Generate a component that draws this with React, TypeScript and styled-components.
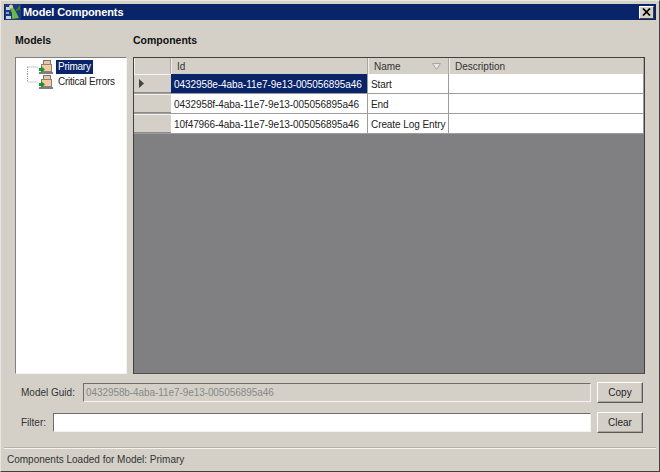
import React from "react";
import styled, { createGlobalStyle } from "styled-components";

const GlobalStyle = createGlobalStyle`
  html, body { margin: 0; padding: 0; background: #d4d0c8; }
  body { font-family: "Liberation Sans", Arial, sans-serif; font-size: 10px; color: #1a1a1a; }
`;

const Window = styled.div`
  width: 660px;
  height: 472px;
  box-sizing: border-box;
  display: flex;
  flex-direction: column;
  background: #d4d0c8;
  border-style: solid;
  border-width: 1px;
  border-color: #e8e6e0 #404040 #404040 #e8e6e0;
  padding: 3px 3px 2px 3px;
`;

const TitleBar = styled.div`
  height: 16px;
  flex: none;
  display: flex;
  align-items: center;
  background: #0a246a;
  padding: 0 2px 0 1px;
  gap: 2px;
`;

const TitleText = styled.span`
  flex: 1;
  color: #fff;
  font-weight: bold;
  font-size: 11px;
  letter-spacing: -0.1px;
`;

const CloseButton = styled.div`
  width: 15px;
  height: 13px;
  display: flex;
  align-items: center;
  justify-content: center;
  background: #d4d0c8;
  border-style: solid;
  border-width: 1px;
  border-color: #fff #404040 #404040 #fff;
  box-sizing: border-box;
`;

const Body = styled.div`
  flex: 1;
  display: flex;
  flex-direction: column;
  padding: 13px 11px 0 11px;
`;

const Panes = styled.div`
  display: flex;
  gap: 6px;
`;

const TreePane = styled.div`
  width: 112px;
  display: flex;
  flex-direction: column;
`;

const GridPane = styled.div`
  width: 512px;
  display: flex;
  flex-direction: column;
`;

const PaneLabel = styled.div`
  height: 24px;
  font-weight: bold;
  font-size: 10.5px;
  line-height: 14px;
  color: #111;
`;

const TreeBox = styled.div`
  height: 317px;
  box-sizing: border-box;
  background: #fff;
  border-style: solid;
  border-width: 1px;
  border-color: #808080 #f4f3ef #f4f3ef #808080;
  padding: 1px 0 0 11px;
`;

const TreeRow = styled.div`
  height: 15px;
  display: flex;
  align-items: center;
  position: relative;
  padding-left: 11px;
`;

const Connector = styled.svg`
  position: absolute;
  left: 0;
  top: 0;
`;

const NodeLabel = styled.span<{ $selected?: boolean }>`
  margin-left: 3px;
  padding: 0 2px;
  line-height: 14px;
  letter-spacing: -0.25px;
  color: ${(p) => (p.$selected ? "#fff" : "#222")};
  background: ${(p) => (p.$selected ? "#0a246a" : "transparent")};
`;

const GridBox = styled.div`
  height: 317px;
  box-sizing: border-box;
  background: #807f82;
  border-style: solid;
  border-width: 1px;
  border-color: #404040 #404040 #505050 #404040;
  display: flex;
  flex-direction: column;
`;

const Columns = "37px 197px 81px 1fr";

const HeaderRow = styled.div`
  height: 16px;
  flex: none;
  display: grid;
  grid-template-columns: ${Columns};
  background: #d4d0c8;
`;

const HeaderCell = styled.div`
  box-sizing: border-box;
  display: flex;
  align-items: center;
  justify-content: space-between;
  padding: 0 7px 0 5px;
  color: #333;
  border-right: 1px solid #a8a69f;
  border-left: 1px solid #f0efeb;
`;

const Row = styled.div`
  height: 19px;
  flex: none;
  display: grid;
  grid-template-columns: ${Columns};
  background: #fff;
  border-bottom: 1px solid #9c9c9c;
  box-sizing: content-box;
`;

const RowHeader = styled.div`
  display: flex;
  align-items: center;
  padding-left: 5px;
  background: #d4d0c8;
  border-top: 1px solid #f4f3ef;
  border-bottom: 1px solid #8e8c86;
  box-sizing: border-box;
`;

const Cell = styled.div<{ $selected?: boolean }>`
  display: flex;
  align-items: center;
  padding: 1px 0 0 3px;
  white-space: nowrap;
  overflow: hidden;
  letter-spacing: -0.08px;
  color: ${(p) => (p.$selected ? "#fff" : "#222")};
  background: ${(p) => (p.$selected ? "#0a246a" : "#fff")};
  border-right: 1px solid #9c9c9c;
  box-sizing: border-box;
`;

const FieldRow = styled.div<{ $top: number }>`
  display: flex;
  align-items: center;
  margin-top: ${(p) => p.$top}px;
  padding-left: 6px;
`;

const FieldLabel = styled.label<{ $width: number }>`
  width: ${(p) => p.$width}px;
  flex: none;
  color: #333;
`;

const TextField = styled.div<{ $disabled?: boolean }>`
  flex: 1;
  height: 19px;
  box-sizing: border-box;
  display: flex;
  align-items: center;
  padding-left: 2px;
  letter-spacing: -0.08px;
  color: #8a8985;
  background: ${(p) => (p.$disabled ? "#d4d0c8" : "#fff")};
  border-style: solid;
  border-width: 1px;
  border-color: #6e6d69 #f4f3ef #f4f3ef #6e6d69;
`;

const Button = styled.div`
  width: 46px;
  height: 21px;
  flex: none;
  margin: 0 2px 0 6px;
  box-sizing: border-box;
  display: flex;
  align-items: center;
  justify-content: center;
  color: #222;
  background: #d4d0c8;
  border-style: solid;
  border-width: 1px;
  border-color: #fff #5a5a5a #5a5a5a #fff;
  box-shadow: inset -1px -1px 0 #a8a69f;
`;

const StatusBar = styled.div`
  height: 21px;
  flex: none;
  box-sizing: border-box;
  display: flex;
  align-items: center;
  padding: 1px 0 0 3px;
  color: #333;
  border-top: 1px solid #f4f3ef;
  box-shadow: 0 -1px 0 #b5b3ac;
`;

function AppIcon() {
  return (
    <svg width="16" height="16" viewBox="0 0 16 16">
      <rect x="0" y="0" width="16" height="16" fill="#1c3a80" />
      <rect x="1" y="3" width="4" height="3" fill="#c8d0d8" />
      <rect x="1" y="8" width="3" height="2" fill="#8fa4c0" />
      <rect x="1" y="12" width="5" height="3" fill="#c8d0d8" />
      <path d="M4 3 L8 3 L11 8 L14 14 L7 15 L7 9 Z" fill="#6ab845" />
      <circle cx="6" cy="2.5" r="2" fill="#e0c8a0" />
      <path d="M10 7 L15 1 L15 6 Z" fill="#3f7a2c" />
    </svg>
  );
}

function CloseGlyph() {
  return (
    <svg width="9" height="8" viewBox="0 0 9 8">
      <path d="M1 0.5 L8 7.5 M8 0.5 L1 7.5" stroke="#000" strokeWidth="1.7" fill="none" />
    </svg>
  );
}

function ModelIcon() {
  return (
    <svg width="15" height="14" viewBox="0 0 15 14" style={{ flex: "none" }}>
      <rect x="5.5" y="0.5" width="7" height="5" fill="#eec4a2" stroke="#6f7a70" />
      <rect x="3.5" y="4.5" width="10" height="7" fill="#f6c9a4" stroke="#8c8078" />
      <rect x="1" y="12" width="14" height="2" fill="#7e7e7e" />
      <path d="M3 6 L7 9.5 L3 13 Z" fill="#119a2a" />
      <rect x="1" y="8" width="3" height="3" fill="#119a2a" />
    </svg>
  );
}

const rows = [
  { id: "0432958e-4aba-11e7-9e13-005056895a46", name: "Start", current: true },
  { id: "0432958f-4aba-11e7-9e13-005056895a46", name: "End" },
  { id: "10f47966-4aba-11e7-9e13-005056895a46", name: "Create Log Entry" },
];

export default function App() {
  return (
    <Window>
      <GlobalStyle />
      <TitleBar>
        <AppIcon />
        <TitleText>Model Components</TitleText>
        <CloseButton>
          <CloseGlyph />
        </CloseButton>
      </TitleBar>
      <Body>
        <Panes>
          <TreePane>
            <PaneLabel>Models</PaneLabel>
            <TreeBox>
              <TreeRow>
                <Connector width="12" height="15">
                  <path d="M0.5 8 H11 M0.5 8 V15" stroke="#999" strokeDasharray="1 1" fill="none" />
                </Connector>
                <ModelIcon />
                <NodeLabel $selected>Primary</NodeLabel>
              </TreeRow>
              <TreeRow>
                <Connector width="12" height="15">
                  <path d="M0.5 0 V8 H11" stroke="#999" strokeDasharray="1 1" fill="none" />
                </Connector>
                <ModelIcon />
                <NodeLabel>Critical Errors</NodeLabel>
              </TreeRow>
            </TreeBox>
          </TreePane>
          <GridPane>
            <PaneLabel>Components</PaneLabel>
            <GridBox>
              <HeaderRow>
                <HeaderCell />
                <HeaderCell>Id</HeaderCell>
                <HeaderCell>
                  Name
                  <svg width="9" height="7" viewBox="0 0 9 7">
                    <path d="M0.5 0.5 H8.5 L4.5 6.5 Z" fill="#e8e6e0" stroke="#a8a69f" />
                  </svg>
                </HeaderCell>
                <HeaderCell>Description</HeaderCell>
              </HeaderRow>
              {rows.map((row) => (
                <Row key={row.id}>
                  <RowHeader>
                    {row.current && (
                      <svg width="6" height="9" viewBox="0 0 6 9">
                        <path d="M0 0 L5 4.5 L0 9 Z" fill="#444" />
                      </svg>
                    )}
                  </RowHeader>
                  <Cell $selected={row.current}>{row.id}</Cell>
                  <Cell>{row.name}</Cell>
                  <Cell />
                </Row>
              ))}
            </GridBox>
          </GridPane>
        </Panes>
        <FieldRow $top={8}>
          <FieldLabel $width={62}>Model Guid:</FieldLabel>
          <TextField $disabled>0432958b-4aba-11e7-9e13-005056895a46</TextField>
          <Button>Copy</Button>
        </FieldRow>
        <FieldRow $top={9}>
          <FieldLabel $width={32}>Filter:</FieldLabel>
          <TextField />
          <Button>Clear</Button>
        </FieldRow>
      </Body>
      <StatusBar>Components Loaded for Model: Primary</StatusBar>
    </Window>
  );
}
